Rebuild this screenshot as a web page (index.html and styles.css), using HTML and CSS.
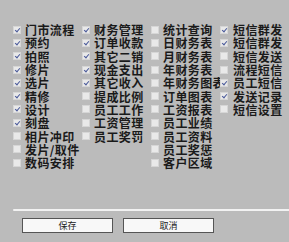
FILE: index.html
```html
<!DOCTYPE html>
<html lang="zh-CN">
<head>
    <meta charset="UTF-8">
    <title>权限设置</title>
    <link rel="stylesheet" href="styles.css">
</head>
<body>

<div class="panel">
    <div class="grid">
        <!-- 第一列 -->
        <div class="col">
            <label class="item"><span class="box on"></span>门市流程</label>
            <label class="item"><span class="box on"></span>预约</label>
            <label class="item"><span class="box on"></span>拍照</label>
            <label class="item"><span class="box on"></span>修片</label>
            <label class="item"><span class="box on"></span>选片</label>
            <label class="item"><span class="box on"></span>精修</label>
            <label class="item"><span class="box on"></span>设计</label>
            <label class="item"><span class="box on"></span>刻盘</label>
            <label class="item"><span class="box"></span>相片冲印</label>
            <label class="item"><span class="box"></span>发片/取件</label>
            <label class="item"><span class="box"></span>数码安排</label>
        </div>
        <!-- 第二列 -->
        <div class="col">
            <label class="item"><span class="box on"></span>财务管理</label>
            <label class="item"><span class="box on"></span>订单收款</label>
            <label class="item"><span class="box on"></span>其它二销</label>
            <label class="item"><span class="box on"></span>现金支出</label>
            <label class="item"><span class="box on"></span>其它收入</label>
            <label class="item"><span class="box"></span>提成比例</label>
            <label class="item"><span class="box"></span>员工工作</label>
            <label class="item"><span class="box"></span>工资管理</label>
            <label class="item"><span class="box"></span>员工奖罚</label>
        </div>
        <!-- 第三列 -->
        <div class="col">
            <label class="item"><span class="box"></span>统计查询</label>
            <label class="item"><span class="box"></span>日财务表</label>
            <label class="item"><span class="box"></span>月财务表</label>
            <label class="item"><span class="box"></span>年财务表</label>
            <label class="item"><span class="box"></span>年财务图表</label>
            <label class="item"><span class="box"></span>订单图表</label>
            <label class="item"><span class="box"></span>工资报表</label>
            <label class="item"><span class="box"></span>员工业绩</label>
            <label class="item"><span class="box"></span>员工资料</label>
            <label class="item"><span class="box"></span>员工奖惩</label>
            <label class="item"><span class="box"></span>客户区域</label>
        </div>
        <!-- 第四列 -->
        <div class="col last">
            <label class="item"><span class="box on"></span>短信群发</label>
            <label class="item"><span class="box on"></span>短信群发</label>
            <label class="item"><span class="box"></span>短信发送</label>
            <label class="item"><span class="box"></span>流程短信</label>
            <label class="item"><span class="box on"></span>员工短信</label>
            <label class="item"><span class="box on"></span>发送记录</label>
            <label class="item"><span class="box"></span>短信设置</label>
        </div>
    </div>

    <div class="divider"></div>

    <div class="buttons">
        <button type="button">保存</button>
        <button type="button">取消</button>
    </div>
</div>

</body>
</html>
```

FILE: styles.css
```css
body {
    margin: 0;
    background-color: #bbbbbb;
    font-family: "Noto Sans CJK SC", "DejaVu Sans", sans-serif;
}

.panel {
    width: 289px;
    height: 242px;
    overflow: hidden;
}

.grid {
    display: flex;
    padding: 23px 0 0 13px;
    height: 161px;
}

.col {
    display: flex;
    flex-direction: column;
    width: 70px;
    overflow: hidden;
}

.item {
    display: flex;
    align-items: center;
    height: 13.3px;
    line-height: 13px;
    font-size: 12px;
    font-weight: bold;
    letter-spacing: 0.4px;
    color: #1a1a1a;
    white-space: nowrap;
}

.box {
    flex: none;
    width: 6px;
    height: 6px;
    margin-right: 4px;
    background-color: #e9e9e9;
    border: 1px solid #d6d6d6;
    position: relative;
}

.box.on::after {
    content: "";
    position: absolute;
    left: 2px;
    top: 0;
    width: 2px;
    height: 4px;
    border: solid #4a5a9a;
    border-width: 0 1px 1px 0;
    transform: rotate(40deg);
}

.last .item .box {
    margin-right: 5px;
}

.divider {
    margin: 25px 0 0 13px;
    height: 2px;
    background-color: #f2f2f2;
    border-radius: 1px 0 0 1px;
}

.buttons {
    display: flex;
    gap: 10px;
    padding: 7px 0 0 22px;
}

button {
    width: 91px;
    height: 15px;
    padding: 0;
    background-color: #f8f8f8;
    border: 1px solid #555555;
    font-family: "Noto Sans CJK SC", sans-serif;
    font-size: 9px;
    line-height: 13px;
    color: #222222;
}
```
